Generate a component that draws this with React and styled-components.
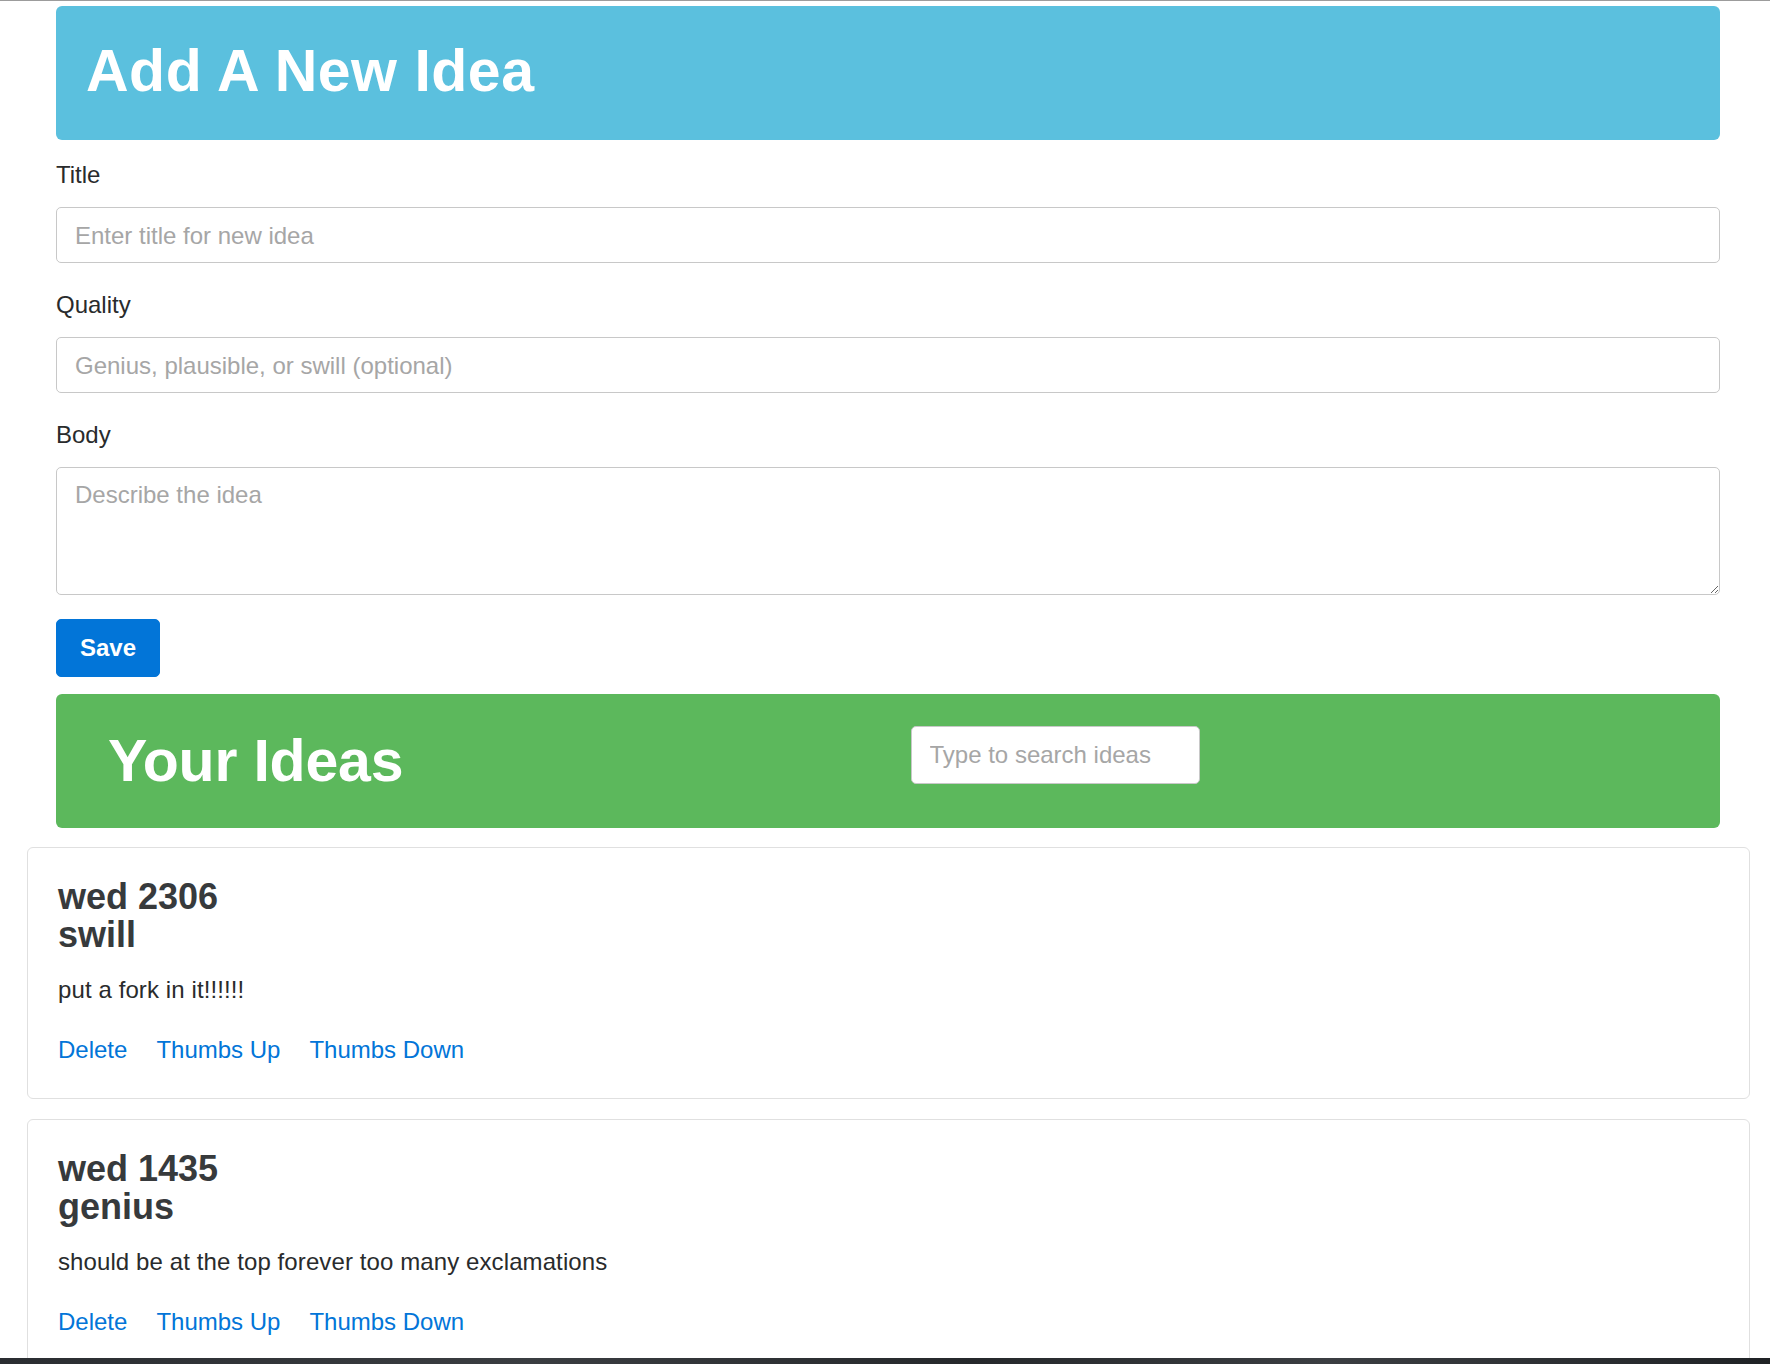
import React from 'react'
import styled, { createGlobalStyle } from 'styled-components'

const GlobalStyle = createGlobalStyle`
html, body {
  margin: 0;
  background: #fff;
}
body {
  font-family: 'Liberation Sans', Arial, Helvetica, sans-serif;
  font-size: 24px;
  line-height: 1.5;
  color: #292b2c;
}
*, *::before, *::after {
  box-sizing: border-box;
}
`

const Page = styled.div`
border-top: 1px solid #9c9c9c;
padding: 5px 20px 40px 27px;
`

const FormSection = styled.section`
margin: 0 30px 0 29px;
`

const Banner = styled.header`
background: ${props => props.$tone};
border-radius: 6px;
color: #fff;
height: 134px;
`

const NewIdeaBanner = styled(Banner)`
padding: 32px 30px 36px;
`

const IdeasBanner = styled(Banner)`
display: grid;
grid-template-columns: 1fr 1fr;
column-gap: 45px;
align-items: center;
padding: 0 52px;
margin-bottom: 19px;
`

const BannerTitle = styled.h1`
margin: 0;
font-size: 59px;
line-height: 66px;
font-weight: bold;
letter-spacing: ${props => props.$spacing || '-0.2px'};
`

const Form = styled.form`
padding-top: 17px;
`

const FormGroup = styled.div`
margin-bottom: 24px;
`

const Label = styled.label`
display: block;
line-height: 36px;
margin-bottom: 14px;
color: #292b2c;
`

const fieldStyles = `
display: block;
width: 100%;
font-family: inherit;
font-size: 24px;
line-height: 30px;
color: #464a4c;
background: #fff;
border: 1px solid #c8c8c8;
border-radius: 5px;
outline: none;
&::placeholder {
  color: #a6a6a6;
  opacity: 1;
}
`

const TextInput = styled.input`
${fieldStyles}
padding: 13px 18px 11px;
height: 56px;
`

const TextArea = styled.textarea`
${fieldStyles}
padding: 12px 18px;
height: 128px;
resize: vertical;
`

const SaveButton = styled.button`
display: inline-block;
font-family: inherit;
font-size: 24px;
font-weight: bold;
line-height: 30px;
color: #fff;
background: #0275d8;
border: 1px solid #0275d8;
border-radius: 5px;
padding: 13px 23px;
cursor: pointer;
`

const ButtonRow = styled.div`
margin-bottom: 17px;
`

const SearchInput = styled.input`
${fieldStyles}
width: 289px;
height: 58px;
padding: 0 18px;
margin-bottom: 12px;
`

const IdeaCard = styled.article`
border: 1px solid #e0e0e0;
border-radius: 6px;
padding: 30px;
margin-bottom: 20px;
background: #fff;
`

const CardTitle = styled.h4`
margin: 0 0 18px;
font-size: 36px;
line-height: 38px;
font-weight: bold;
color: #373a3c;

span {
  display: block;
}
`

const CardText = styled.p`
margin: 0 0 24px;
line-height: 36px;
letter-spacing: 0.1px;
`

const CardLinks = styled.div`
display: flex;
gap: 29px;
line-height: 36px;
`

const CardLink = styled.a`
color: #0275d8;
text-decoration: none;
`

const DesktopEdge = styled.div`
position: fixed;
left: 0;
right: 0;
bottom: 0;
height: 6px;
background: linear-gradient(90deg, #2a2d31 0%, #3a3d41 30%, #25282b 55%, #3b3e42 75%, #1f2225 100%);
`

const ideas = [
  { id: 1, title: 'wed 2306', quality: 'swill', body: 'put a fork in it!!!!!!' },
  { id: 2, title: 'wed 1435', quality: 'genius', body: 'should be at the top forever too many exclamations' },
]

const App = () => {
  return (
    <Page>
      <GlobalStyle />
      <FormSection>
        <NewIdeaBanner $tone="#5bc0de">
          <BannerTitle $spacing="0.5px">Add A New Idea</BannerTitle>
        </NewIdeaBanner>

        <Form onSubmit={e => e.preventDefault()}>
          <FormGroup>
            <Label htmlFor="title">Title</Label>
            <TextInput id="title" type="text" placeholder="Enter title for new idea" />
          </FormGroup>
          <FormGroup>
            <Label htmlFor="quality">Quality</Label>
            <TextInput id="quality" type="text" placeholder="Genius, plausible, or swill (optional)" />
          </FormGroup>
          <FormGroup>
            <Label htmlFor="body">Body</Label>
            <TextArea id="body" placeholder="Describe the idea" />
          </FormGroup>
          <ButtonRow>
            <SaveButton type="submit">Save</SaveButton>
          </ButtonRow>
        </Form>

        <IdeasBanner $tone="#5cb85c">
          <BannerTitle>Your Ideas</BannerTitle>
          <div>
            <SearchInput type="text" placeholder="Type to search ideas" />
          </div>
        </IdeasBanner>
      </FormSection>

      {ideas.map(idea => (
        <IdeaCard key={idea.id}>
          <CardTitle>
            <span>{idea.title}</span>
            <span>{idea.quality}</span>
          </CardTitle>
          <CardText>{idea.body}</CardText>
          <CardLinks>
            <CardLink href="#">Delete</CardLink>
            <CardLink href="#">Thumbs Up</CardLink>
            <CardLink href="#">Thumbs Down</CardLink>
          </CardLinks>
        </IdeaCard>
      ))}

      <DesktopEdge />
    </Page>
  )
}

export default App
